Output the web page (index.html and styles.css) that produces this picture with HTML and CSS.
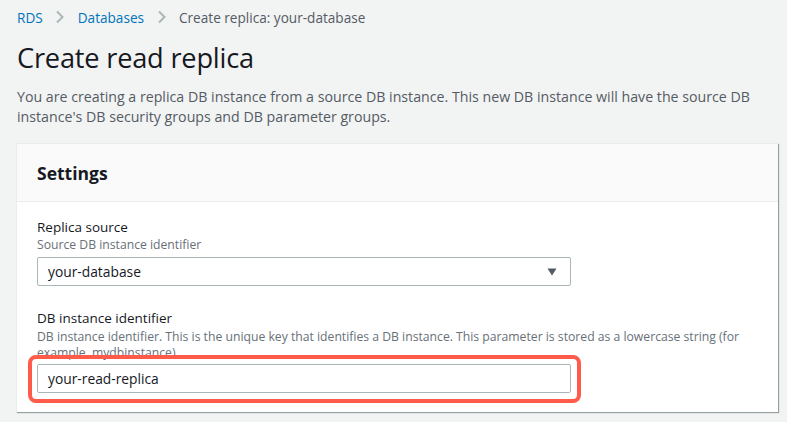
FILE: index.html
```html
<!DOCTYPE html>
<html>
<head>
<meta charset="utf-8">
<link rel="stylesheet" href="styles.css">
</head>
<body>
<nav class="crumbs">
  <a class="crumb-link">RDS</a>
  <svg class="chev" width="10" height="14" viewBox="0 0 10 14"><path d="M2 1.5 L7.5 7 L2 12.5" fill="none" stroke="#aab7b8" stroke-width="2"/></svg>
  <a class="crumb-link">Databases</a>
  <svg class="chev" width="10" height="14" viewBox="0 0 10 14"><path d="M2 1.5 L7.5 7 L2 12.5" fill="none" stroke="#aab7b8" stroke-width="2"/></svg>
  <span class="crumb-current">Create replica: your-database</span>
</nav>
<h1 class="title">Create read replica</h1>
<p class="intro">You are creating a replica DB instance from a source DB instance. This new DB instance will have the source DB instance's DB security groups and DB parameter groups.</p>
<section class="card">
  <header class="card-head"><h2>Settings</h2></header>
  <div class="card-body">
    <div class="field">
      <div class="label">Replica source</div>
      <div class="hint">Source DB instance identifier</div>
      <div class="select">
        <span>your-database</span>
        <svg width="10" height="8" viewBox="0 0 10 8"><path d="M0.5 0.5 H9.5 L5 7.5 Z" fill="#545b64"/></svg>
      </div>
    </div>
    <div class="field field2">
      <div class="label">DB instance identifier</div>
      <div class="hint">DB instance identifier. This is the unique key that identifies a DB instance. This parameter is stored as a lowercase string (for example, mydbinstance).</div>
      <div class="highlight">
        <div class="input">your-read-replica</div>
      </div>
    </div>
  </div>
</section>
</body>
</html>
```
FILE: styles.css
```css
* { box-sizing: border-box; }
html, body { margin: 0; padding: 0; }
body {
  background: #f2f3f3;
  font-family: "Open Sans", "Noto Sans", sans-serif;
  color: #16191f;
  width: 787px;
  height: 422px;
  overflow: hidden;
}
.crumbs {
  display: flex;
  align-items: center;
  height: 34px;
  padding: 0 0 0 17px;
  font-size: 13.6px;
  gap: 12.5px;
}
.crumb-link { color: #0073bb; }
.crumb-current { color: #545b64; }
.chev { display: block; }
.title {
  margin: 6px 0 0 17px;
  font-size: 27.2px;
  font-weight: 400;
  line-height: 36px;
  letter-spacing: -0.2px;
}
.intro {
  margin: 11px 20px 0 17px;
  font-size: 14.2px;
  line-height: 20px;
  color: #545b64;
}
.card {
  margin: 16px 9px 0 16px;
  background: #fff;
  border-top: 1px solid #eaeded;
  border-left: 1px solid #eaeded;
  box-shadow: 1px 1px 1px 0 rgba(0,28,36,0.3), 1px 1px 0 0 #d5dbdb;
  height: 269px;
}
.card-head {
  background: #fafafa;
  height: 58px;
  border-bottom: 1px solid #eaeded;
  display: flex;
  align-items: center;
  padding-left: 20px;
}
.card-head h2 {
  margin: 0;
  font-size: 17.5px;
  font-weight: 700;
}
.card-body { padding: 15px 20px 0 20px; }
.label { font-size: 13.5px; line-height: 20px; }
.hint { font-size: 12.2px; line-height: 16px; color: #687078; }
.select, .input {
  width: 534px;
  height: 29px;
  border: 1px solid #aab7b8;
  border-radius: 2px;
  background: #fff;
  font-size: 13.8px;
  padding: 0 10px;
  display: flex;
  align-items: center;
}
.select { margin-top: 4px; justify-content: space-between; padding-right: 13px; }
.field2 { margin-top: 22px; }
.field2 .hint { margin-top: 1px; }
.highlight {
  margin: -6px 0 0 -9px;
  width: 553px;
  height: 48px;
  border: 4px solid #ff5a4a;
  border-radius: 8px;
  padding: 5px 0 0 5px;
  position: relative;
}
```
